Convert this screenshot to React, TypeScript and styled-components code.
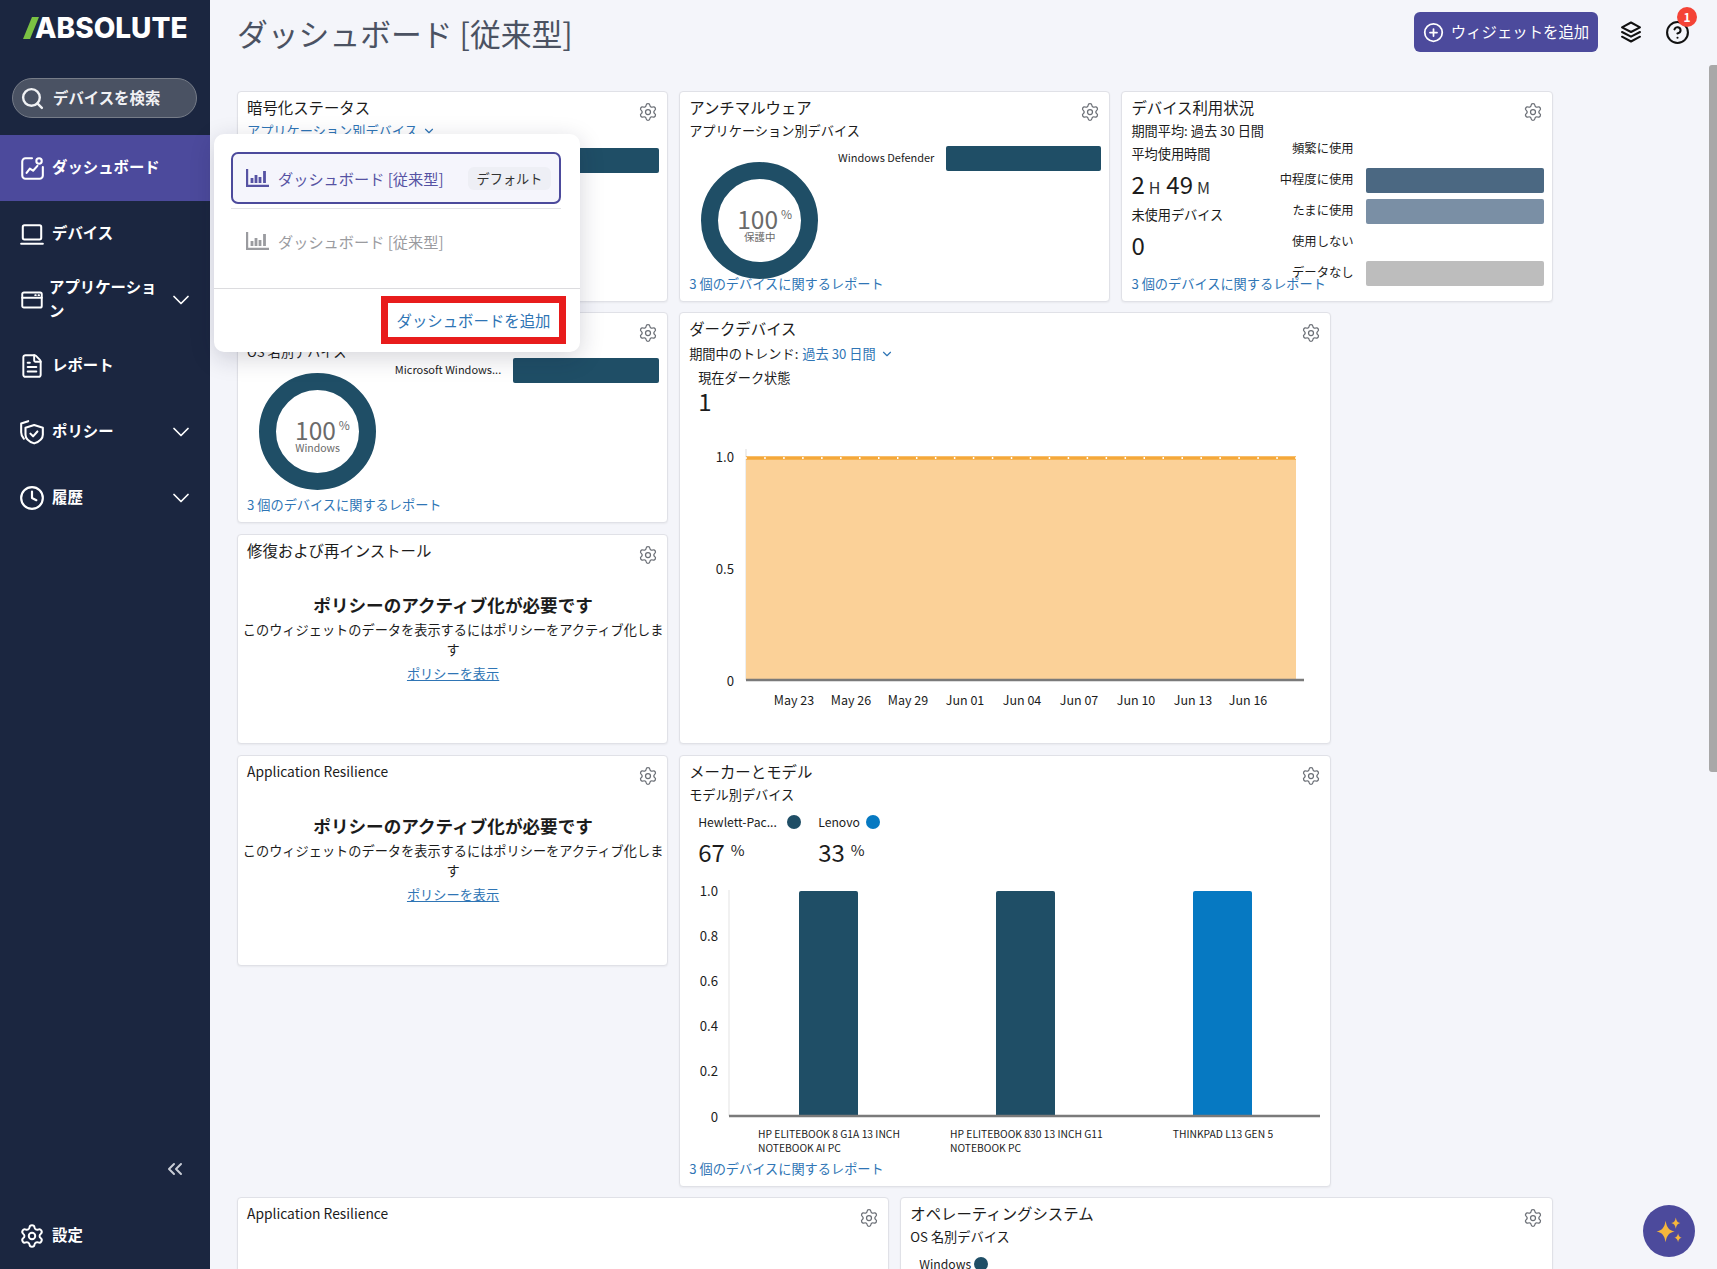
import React from "react";
import styled, { createGlobalStyle } from "styled-components";
import {
  ChevronDown,
  ChevronsLeft,
  CircleHelp,
  CirclePlus,
  Clock,
  FileText,
  Search,
  Settings,
} from "lucide-react";

const NAVY = "#1b2640";
const PURPLE = "#4c4a9c";
const TEAL = "#1f4e66";
const LINK = "#2f75b5";

const GlobalStyle = createGlobalStyle`
  html, body {
    margin: 0;
    height: 100%;
    overflow: hidden;
    background: #f4f5fa;
    font-family: "Noto Sans CJK JP", "Noto Sans", sans-serif;
    color: #1c1c1c;
  }
  * { box-sizing: border-box; }
`;

//@ icons ////////////////////////////////////////
const DashIcon = () => (
  <svg width="26" height="26" viewBox="0 0 24 24" fill="none" stroke="currentColor" strokeWidth="1.9" strokeLinecap="round" strokeLinejoin="round">
    <path d="M12 3H6a3 3 0 0 0-3 3v13a3 3 0 0 0 3 3h13a3 3 0 0 0 3-3v-8" />
    <circle cx="18.500" cy="5.500" r="2.500" />
    <path d="M7 16.500l3-4 3 2 4-4.500" />
  </svg>
);

const LaptopIcon = () => (
  <svg width="26" height="26" viewBox="0 0 24 24" fill="none" stroke="currentColor" strokeWidth="1.9" strokeLinecap="round" strokeLinejoin="round">
    <rect x="3.500" y="4" width="17" height="13" rx="1.500" />
    <path d="M2 21h20" />
  </svg>
);

const AppIcon = () => (
  <svg width="26" height="26" viewBox="0 0 24 24" fill="none" stroke="currentColor" strokeWidth="1.8" strokeLinecap="round" strokeLinejoin="round">
    <rect x="3" y="5" width="18" height="14" rx="1.500" />
    <path d="M3 10h18M15 7.500h.5M18 7.500h.5" />
  </svg>
);

const ShieldIcon = () => (
  <svg width="26" height="26" viewBox="0 0 24 24" fill="none" stroke="currentColor" strokeWidth="1.9" strokeLinecap="round" strokeLinejoin="round">
    <path d="M14 5.500l8 2.500v6.500c0 4-3.500 6.500-8 8-4.500-1.500-8-4-8-8V8z" />
    <path d="M10.500 13.500l2.500 2.500 4-4.500" />
    <path d="M8.500 2L2 4.200v8c0 2.500 1 4.500 2.500 6" />
  </svg>
);

const LayersIcon = () => (
  <svg width="24" height="24" viewBox="0 0 24 24" fill="none" stroke="currentColor" strokeWidth="2" strokeLinecap="round" strokeLinejoin="round">
    <path d="M12 2.500l9 4.800-9 4.700-9-4.700z" />
    <path d="M3 12l9 4.700 9-4.700" />
    <path d="M3 16.700l9 4.800 9-4.800" />
  </svg>
);

const BarsIcon = () => (
  <svg width="23" height="18" viewBox="0 0 23 18" fill="none" stroke="currentColor">
    <path d="M1 0v17h22" strokeWidth="2.400" />
    <path d="M6 14v-5M10 14V6M14 14V8M18.500 14V2" strokeWidth="2.800" />
  </svg>
);

const SparkIcon = () => (
  <svg width="34" height="34" viewBox="0 0 30 30" fill="#f6b73c">
    <path d="M12 6c1 6 3 8.500 8 9.500-5 1-7 3.500-8 9.500-1-6-3-8.500-8-9.500 5-1 7-3.500 8-9.500z" />
    <path d="M21 3c.5 3 1.500 4.500 4 5-2.500.5-3.500 2-4 5-.5-3-1.500-4.500-4-5 2.500-.5 3.500-2 4-5z" />
    <path d="M23 17c.4 2.400 1.200 3.500 3.200 4-2 .5-2.800 1.600-3.200 4-.4-2.400-1.200-3.500-3.200-4 2-.5 2.800-1.600 3.200-4z" />
  </svg>
);

//@ chart data ////////////////////////////////////
const darkTicks = Array.from({ length: 30 }, (_, i) => 66 + (i * 550) / 29);
const darkDates = [
  ["May 23", 114],
  ["May 26", 171],
  ["May 29", 228],
  ["Jun 01", 285],
  ["Jun 04", 342],
  ["Jun 07", 399],
  ["Jun 10", 456],
  ["Jun 13", 513],
  ["Jun 16", 568],
] as const;

const modelBars = [
  { x: 119, color: TEAL },
  { x: 316, color: TEAL },
  { x: 513, color: "#0679c2" },
];

const usageRows = [
  { label: "頻繁に使用" },
  { label: "中程度に使用", color: "#4b6882" },
  { label: "たまに使用", color: "#7a8fa5" },
  { label: "使用しない" },
  { label: "データなし", color: "#bdbdbd" },
];

function CardHead({ children, latin }: { children: React.ReactNode; latin?: boolean }) {
  return (
    <Head>
      <CardTitle $latin={latin}>{children}</CardTitle>
      <Gear>
        <Settings size={20} strokeWidth={1.5} />
      </Gear>
    </Head>
  );
}

function DonutBlock(props: {
  caption: string;
  label: string;
  barW: number;
  barTop: number;
  donutTop: number;
}) {
  return (
    <DonutBody>
      <Donut $top={props.donutTop}>
        <svg width="117" height="117" viewBox="0 0 117 117">
          <circle cx="58.500" cy="58.500" r="50" fill="none" stroke={TEAL} strokeWidth="17" />
        </svg>
        <DonutCenter>
          <DonutValue>
            100<small>%</small>
          </DonutValue>
          <DonutCaption>{props.caption}</DonutCaption>
        </DonutCenter>
      </Donut>
      <BarRow $top={props.barTop}>
        <BarLabel>{props.label}</BarLabel>
        <Bar $w={props.barW} $color={TEAL} />
      </BarRow>
    </DonutBody>
  );
}

function PolicyNotice() {
  return (
    <Notice>
      <NoticeTitle>ポリシーのアクティブ化が必要です</NoticeTitle>
      <NoticeText>このウィジェットのデータを表示するにはポリシーをアクティブ化します</NoticeText>
      <NoticeLink>ポリシーを表示</NoticeLink>
    </Notice>
  );
}

function App() {
  return (
    <Shell>
      <GlobalStyle />
      <Sidebar>
        <Logo>
          <svg width="16" height="22" viewBox="0 0 16 22">
            <path d="M9 0h7L7 22H0z" fill="#7ac143" />
          </svg>
          <LogoText>ABSOLUTE</LogoText>
        </Logo>
        <SearchBox>
          <Search size={25} strokeWidth={2.3} />
          <span>デバイスを検索</span>
        </SearchBox>
        <Nav>
          <NavItem $active>
            <DashIcon />
            <NavLabel>ダッシュボード</NavLabel>
          </NavItem>
          <NavItem>
            <LaptopIcon />
            <NavLabel>デバイス</NavLabel>
          </NavItem>
          <NavItem>
            <AppIcon />
            <NavLabel $tight>アプリケーション</NavLabel>
            <ChevronDown size={28} strokeWidth={1.5} />
          </NavItem>
          <NavItem>
            <FileText size={26} strokeWidth={1.8} />
            <NavLabel>レポート</NavLabel>
          </NavItem>
          <NavItem>
            <ShieldIcon />
            <NavLabel>ポリシー</NavLabel>
            <ChevronDown size={28} strokeWidth={1.5} />
          </NavItem>
          <NavItem>
            <Clock size={26} strokeWidth={2} />
            <NavLabel>履歴</NavLabel>
            <ChevronDown size={28} strokeWidth={1.5} />
          </NavItem>
        </Nav>
        <Collapse>
          <ChevronsLeft size={24} strokeWidth={2} />
        </Collapse>
        <NavItem>
          <Settings size={26} strokeWidth={1.8} />
          <NavLabel>設定</NavLabel>
        </NavItem>
      </Sidebar>

      <Main>
        <TopBar>
          <PageTitle>ダッシュボード [従来型]</PageTitle>
          <AddWidget>
            <CirclePlus size={21} strokeWidth={2} />
            <span>ウィジェットを追加</span>
          </AddWidget>
          <IconSlot>
            <LayersIcon />
          </IconSlot>
          <IconSlot>
            <CircleHelp size={25} strokeWidth={2} />
            <Badge>1</Badge>
          </IconSlot>
        </TopBar>

        <Scroller>
          <Board>
            <Card $col={1} $span={2} $row={1}>
              <CardHead>暗号化ステータス</CardHead>
              <SubLink>
                アプリケーション別デバイス <ChevronDown size={14} />
              </SubLink>
              <DonutBlock caption="保護中" label="Windows Defender" barW={146} barTop={7} donutTop={21} />
              <ReportLink>3 個のデバイスに関するレポート</ReportLink>
            </Card>

            <Card $col={3} $span={2} $row={1}>
              <CardHead>アンチマルウェア</CardHead>
              <SubText>アプリケーション別デバイス</SubText>
              <DonutBlock caption="保護中" label="Windows Defender" barW={155} barTop={5} donutTop={21} />
              <ReportLink>3 個のデバイスに関するレポート</ReportLink>
            </Card>

            <Card $col={5} $span={2} $row={1}>
              <CardHead>デバイス利用状況</CardHead>
              <UsageBody>
                <UsageLeft>
                  <UsageSub>期間平均: 過去 30 日間</UsageSub>
                  <UsageCaption>平均使用時間</UsageCaption>
                  <BigValue>
                    2<small>H</small>49<small>M</small>
                  </BigValue>
                  <UsageCaption>未使用デバイス</UsageCaption>
                  <BigValue>0</BigValue>
                </UsageLeft>
                <UsageRight>
                  {usageRows.map((row) => (
                    <UsageRow key={row.label}>
                      <UsageLabel>{row.label}</UsageLabel>
                      {row.color && <Bar $w={178} $color={row.color} />}
                    </UsageRow>
                  ))}
                </UsageRight>
              </UsageBody>
              <ReportLink>3 個のデバイスに関するレポート</ReportLink>
            </Card>

            <Card $col={1} $span={2} $row={2}>
              <CardHead>オペレーティングシステム</CardHead>
              <SubText>OS 名別デバイス</SubText>
              <DonutBlock caption="Windows" label="Microsoft Windows..." barW={146} barTop={-4} donutTop={11} />
              <ReportLink>3 個のデバイスに関するレポート</ReportLink>
            </Card>

            <Card $col={3} $span={3} $row={2} $rows={2}>
              <CardHead>ダークデバイス</CardHead>
              <TrendLine>
                期間中のトレンド: <em>過去 30 日間</em> <ChevronDown size={14} color={LINK} />
              </TrendLine>
              <DarkStat>
                <span>現在ダーク状態</span>
                <strong>1</strong>
              </DarkStat>
              <ChartSvg $top={3} width="652" height="300" viewBox="0 0 652 300">
                <line x1="66" y1="30" x2="66" y2="261" stroke="#dddddd" />
                <rect x="66" y="39" width="550" height="222" fill="#fbd198" />
                <line x1="66" y1="39" x2="616" y2="39" stroke="#f5a83a" strokeWidth="3.500" />
                {darkTicks.map((x) => (
                  <line key={x} x1={x} y1="38" x2={x} y2="40" stroke="#ffffff" strokeWidth="1.500" />
                ))}
                <line x1="66" y1="261" x2="624" y2="261" stroke="#7a7a7a" strokeWidth="2.500" />
                <text x="54" y="37" textAnchor="end" dominantBaseline="central">1.0</text>
                <text x="54" y="149" textAnchor="end" dominantBaseline="central">0.5</text>
                <text x="54" y="261" textAnchor="end" dominantBaseline="central">0</text>
                {darkDates.map(([label, x]) => (
                  <DateLabel key={label} x={x} y="280" textAnchor="middle" dominantBaseline="central">{label}</DateLabel>
                ))}
              </ChartSvg>
            </Card>

            <Card $col={1} $span={2} $row={3}>
              <CardHead>修復および再インストール</CardHead>
              <PolicyNotice />
            </Card>

            <Card $col={1} $span={2} $row={4}>
              <CardHead latin>Application Resilience</CardHead>
              <PolicyNotice />
            </Card>

            <Card $col={3} $span={3} $row={4} $rows={2}>
              <CardHead>メーカーとモデル</CardHead>
              <SubText>モデル別デバイス</SubText>
              <Legend>
                <LegendItem>
                  <LegendName $gap={10}>
                    Hewlett-Pac...
                    <Dot $color={TEAL} />
                  </LegendName>
                  <Percent>
                    67<small>%</small>
                  </Percent>
                </LegendItem>
                <LegendItem>
                  <LegendName $gap={6}>
                    Lenovo
                    <Dot $color="#0679c2" />
                  </LegendName>
                  <Percent>
                    33<small>%</small>
                  </Percent>
                </LegendItem>
              </Legend>
              <ChartSvg $top={11} width="652" height="280" viewBox="0 0 652 280">
                <line x1="49" y1="11" x2="49" y2="237" stroke="#e3e3e3" />
                {["1.0", "0.8", "0.6", "0.4", "0.2", "0"].map((tick, i) => (
                  <text key={tick} x="38" y={11 + i * 45.2} textAnchor="end" dominantBaseline="central">{tick}</text>
                ))}
                {modelBars.map((bar) => (
                  <path key={bar.x} d={`M${bar.x} 237V14a2 2 0 0 1 2-2h55a2 2 0 0 1 2 2v223z`} fill={bar.color} />
                ))}
                <line x1="49" y1="237" x2="640" y2="237" stroke="#7a7a7a" strokeWidth="2.500" />
                <XLabel x="78" y="254" dominantBaseline="central">HP ELITEBOOK 8 G1A 13 INCH</XLabel>
                <XLabel x="78" y="268" dominantBaseline="central">NOTEBOOK AI PC</XLabel>
                <XLabel x="270" y="254" dominantBaseline="central">HP ELITEBOOK 830 13 INCH G11</XLabel>
                <XLabel x="270" y="268" dominantBaseline="central">NOTEBOOK PC</XLabel>
                <XLabel x="543" y="254" textAnchor="middle" dominantBaseline="central">THINKPAD L13 GEN 5</XLabel>
              </ChartSvg>
              <ReportLink>3 個のデバイスに関するレポート</ReportLink>
            </Card>

            <Card $col={1} $span={3} $row={6} $rows={2}>
              <CardHead latin>Application Resilience</CardHead>
            </Card>

            <Card $col={4} $span={3} $row={6} $rows={2}>
              <CardHead>オペレーティングシステム</CardHead>
              <SubText>OS 名別デバイス</SubText>
              <Legend>
                <LegendItem>
                  <LegendName $gap={3}>
                    Windows
                    <Dot $color={TEAL} />
                  </LegendName>
                  <Percent>
                    100<small>%</small>
                  </Percent>
                </LegendItem>
              </Legend>
            </Card>
          </Board>
        </Scroller>
      </Main>

      <Popup>
        <PopupItem $active>
          <BarsIcon />
          <PopupName>ダッシュボード [従来型]</PopupName>
          <DefaultTag>デフォルト</DefaultTag>
        </PopupItem>
        <PopupRule />
        <PopupItem>
          <BarsIcon />
          <PopupName>ダッシュボード [従来型]</PopupName>
        </PopupItem>
        <PopupFooter>
          <AddDashboard>ダッシュボードを追加</AddDashboard>
        </PopupFooter>
      </Popup>

      <ScrollThumb />
      <Fab>
        <SparkIcon />
      </Fab>
    </Shell>
  );
}

//@ styled ////////////////////////////////////////
const Shell = styled.div`
  position: relative;
  display: flex;
  width: 100%;
  height: 100vh;
  overflow: hidden;
`;

const Sidebar = styled.aside`
  width: 210px;
  flex: none;
  display: flex;
  flex-direction: column;
  background: ${NAVY};
  color: #ffffff;
`;

const Logo = styled.div`
  height: 78px;
  flex: none;
  display: flex;
  align-items: flex-start;
  padding: 17px 0 0 23px;
`;

const LogoText = styled.span`
  font-family: Inter, "Liberation Sans", sans-serif;
  font-size: 28px;
  font-weight: 800;
  line-height: 22px;
  margin-left: -4px;
`;

const SearchBox = styled.div`
  height: 40px;
  margin: 0 13px 0 12px;
  padding: 0 8px 0 7px;
  display: flex;
  align-items: center;
  gap: 8px;
  border: 1px solid #767c88;
  border-radius: 20px;
  background: #4a5263;
  color: #f0f1f4;
  font-size: 15.400px;
  font-weight: 700;

  & > span {
    padding-bottom: 3px;
  }
`;

const Nav = styled.nav`
  margin-top: 17px;
  flex: 1;
`;

const NavItem = styled.div<{ $active?: boolean }>`
  height: 66px;
  padding: 0 15px 0 19px;
  display: flex;
  align-items: center;
  gap: 7px;
  background: ${({ $active }) => ($active ? PURPLE : "transparent")};
  color: #ffffff;
  font-size: 15.400px;
  font-weight: 700;

  & > svg {
    flex: none;
  }
`;

const NavLabel = styled.span<{ $tight?: boolean }>`
  flex: 1;
  margin-left: ${({ $tight }) => ($tight ? "-3px" : "0")};
  padding-bottom: 4px;
  line-height: 24px;
`;

const Collapse = styled.div`
  height: 66px;
  padding: 0 23px 2px 0;
  display: flex;
  align-items: center;
  justify-content: flex-end;
  color: #c9cdd6;
`;

const Main = styled.main`
  flex: 1;
  min-width: 0;
  display: flex;
  flex-direction: column;
`;

const TopBar = styled.header`
  height: 64px;
  flex: none;
  padding: 0 27px;
  display: flex;
  align-items: center;
  gap: 21px;
`;

const PageTitle = styled.h1`
  flex: 1;
  margin: 0;
  font-size: 30.800px;
  font-weight: 400;
  color: #4b5262;
`;

const AddWidget = styled.button`
  width: 184px;
  height: 40px;
  border: 0;
  border-radius: 6px;
  display: flex;
  align-items: center;
  justify-content: center;
  gap: 7px;
  background: ${PURPLE};
  color: #ffffff;
  font: inherit;
  font-size: 15.400px;

  & > span {
    padding-bottom: 3px;
  }
`;

const IconSlot = styled.div`
  position: relative;
  width: 25px;
  height: 25px;
  color: #111111;
`;

const Badge = styled.span`
  position: absolute;
  top: -13px;
  right: -7px;
  width: 20px;
  height: 20px;
  border-radius: 50%;
  background: #f44336;
  color: #ffffff;
  font-size: 12px;
  font-weight: 700;
  line-height: 20px;
  text-align: center;
`;

const Scroller = styled.div`
  flex: 1;
  min-height: 0;
  overflow: hidden;
  padding: 27px 0 0 27px;
`;

const Board = styled.div`
  display: grid;
  grid-template-columns: repeat(6, 210.100px);
  grid-auto-rows: 210.800px;
  gap: 10.500px 11px;
`;

const Card = styled.section<{ $col: number; $span: number; $row: number; $rows?: number }>`
  grid-column: ${({ $col, $span }) => `${$col} / span ${$span}`};
  grid-row: ${({ $row, $rows = 1 }) => `${$row} / span ${$rows}`};
  min-height: 0;
  padding: 5px 8px 7px 9px;
  display: flex;
  flex-direction: column;
  background: #ffffff;
  border: 1px solid #e0e1e7;
  border-radius: 4px;
  box-shadow: 0 1px 2px rgba(0, 0, 0, 0.05);
`;

const Head = styled.div`
  height: 24px;
  flex: none;
  display: flex;
  justify-content: space-between;
  align-items: flex-start;
`;

const CardTitle = styled.h2<{ $latin?: boolean }>`
  margin: 0;
  font-size: ${({ $latin }) => ($latin ? "13.800px" : "15.400px")};
  font-weight: 400;
  line-height: 20px;
`;

const Gear = styled.span`
  width: 22px;
  height: 22px;
  margin-top: 4px;
  display: flex;
  align-items: center;
  justify-content: center;
  color: #6b6f76;
`;

const SubText = styled.div`
  font-size: 13.200px;
  line-height: 20px;
`;

const SubLink = styled(SubText)`
  color: ${LINK};
  display: flex;
  align-items: center;
  gap: 4px;
`;

const TrendLine = styled(SubText)`
  margin-top: 2px;
  display: flex;
  align-items: center;
  gap: 4px;

  & em {
    font-style: normal;
    color: ${LINK};
  }
`;

const DonutBody = styled.div`
  flex: 1;
  min-height: 0;
  display: flex;
  justify-content: space-between;
  align-items: flex-start;
`;

const Donut = styled.div<{ $top: number }>`
  position: relative;
  width: 117px;
  height: 117px;
  margin: ${({ $top }) => $top}px 0 0 12px;
  flex: none;

  & > svg {
    display: block;
  }
`;

const DonutCenter = styled.div`
  position: absolute;
  inset: 0;
  display: flex;
  flex-direction: column;
  align-items: center;
  justify-content: center;
  color: #6a6a6a;
`;

const DonutValue = styled.div`
  margin-top: 3px;
  padding-left: 10px;
  font-size: 24.500px;
  line-height: 26px;

  & small {
    font-size: 12px;
    margin-left: 3px;
    vertical-align: 10px;
  }
`;

const DonutCaption = styled.div`
  margin-top: -2px;
  font-size: 10.500px;
  line-height: 13px;
`;

const BarRow = styled.div<{ $top: number }>`
  margin-top: ${({ $top }) => $top}px;
  display: flex;
  align-items: center;
  gap: 12px;
`;

const BarLabel = styled.span`
  padding-bottom: 4px;
  font-size: 11px;
  white-space: nowrap;
`;

const UsageLabel = styled(BarLabel)`
  font-size: 12.300px;
`;

const Bar = styled.div<{ $w: number; $color: string }>`
  width: ${({ $w }) => $w}px;
  height: 25px;
  flex: none;
  border-radius: 2px;
  background: ${({ $color }) => $color};
`;

const ReportLink = styled.a`
  height: 20px;
  flex: none;
  font-size: 13.200px;
  line-height: 20px;
  color: ${LINK};
`;

const UsageBody = styled.div`
  flex: 1;
  min-height: 0;
  display: flex;
  justify-content: space-between;
`;

const UsageLeft = styled.div`
  display: flex;
  flex-direction: column;
`;

const UsageSub = styled(SubText)`
  margin-bottom: 2px;
`;

const UsageCaption = styled.div`
  margin-top: 1px;
  font-size: 13.200px;
  line-height: 20px;
`;

const BigValue = styled.div`
  height: 40px;
  font-size: 24px;
  line-height: 40px;

  & small {
    font-size: 16px;
    margin: 0 6px 0 4px;
    color: #333333;
  }
`;

const UsageRight = styled.div`
  padding-top: 16px;
  display: flex;
  flex-direction: column;
  gap: 6px;
`;

const UsageRow = styled.div`
  width: 273px;
  height: 25px;
  flex: none;
  display: grid;
  grid-template-columns: 1fr 178px;
  column-gap: 12px;
  align-items: center;
  text-align: right;
`;

const DarkStat = styled.div`
  margin: 4px 0 0 9px;
  display: flex;
  flex-direction: column;
  font-size: 13.200px;
  line-height: 20px;

  & strong {
    margin-top: -2px;
    font-size: 24px;
    font-weight: 400;
    line-height: 30px;
  }
`;

const ChartSvg = styled.svg<{ $top: number }>`
  display: block;
  flex: none;
  margin: ${({ $top }) => $top}px -9px 0 -9px;

  & text {
    font-family: "Noto Sans CJK JP", sans-serif;
    font-size: 13.200px;
    fill: #1c1c1c;
  }
`;

const DateLabel = styled.text`
  && {
    font-size: 12.500px;
  }
`;

const XLabel = styled.text`
  && {
    font-size: 10.300px;
  }
`;

const Legend = styled.div`
  margin-top: 7px;
  padding-left: 9px;
  display: flex;
`;

const LegendItem = styled.div`
  width: 120px;
`;

const LegendName = styled.div<{ $gap: number }>`
  height: 20px;
  display: flex;
  align-items: center;
  gap: ${({ $gap }) => $gap}px;
  font-size: 12.200px;
`;

const Dot = styled.i<{ $color: string }>`
  width: 14px;
  height: 14px;
  border-radius: 50%;
  background: ${({ $color }) => $color};
`;

const Percent = styled.div`
  margin-top: 2px;
  font-size: 24px;
  line-height: 32px;

  & small {
    margin-left: 6px;
    font-size: 15px;
    vertical-align: 6px;
  }
`;

const Notice = styled.div`
  margin: 28px -6px 0;
  text-align: center;
`;

const NoticeTitle = styled.div`
  font-size: 17.600px;
  font-weight: 700;
  line-height: 26px;
`;

const NoticeText = styled.div`
  margin-top: 2px;
  font-size: 13.200px;
  line-height: 20.500px;
`;

const NoticeLink = styled.a`
  display: block;
  margin-top: 3px;
  font-size: 13.200px;
  line-height: 20px;
  color: ${LINK};
  text-decoration: underline;
`;

const Popup = styled.div`
  position: absolute;
  left: 214px;
  top: 134px;
  width: 366px;
  height: 218px;
  padding-top: 18px;
  background: #ffffff;
  border-radius: 10px;
  box-shadow: 0 6px 24px rgba(20, 24, 50, 0.18);
`;

const PopupItem = styled.div<{ $active?: boolean }>`
  height: 52px;
  margin: 0 19px 0 17px;
  padding: 0 8px 0 13px;
  display: flex;
  align-items: center;
  gap: 9px;
  border: ${({ $active }) => ($active ? `2px solid ${PURPLE}` : "2px solid transparent")};
  border-radius: 7px;
  background: ${({ $active }) => ($active ? "#f5f5fc" : "transparent")};
  color: ${({ $active }) => ($active ? "#5652a3" : "#9a9b9f")};
`;

const PopupName = styled.span`
  flex: 1;
  font-size: 15.200px;
`;

const DefaultTag = styled.span`
  width: 83px;
  height: 23px;
  border-radius: 6px;
  background: #eeeff5;
  color: #333333;
  font-size: 13.200px;
  line-height: 23px;
  text-align: center;
`;

const PopupRule = styled.hr`
  margin: 4px 19px 6px 17px;
  border: 0;
  border-top: 1px solid #e3e3e6;
`;

const PopupFooter = styled.div`
  margin-top: 21px;
  padding: 7px 14px 0 0;
  display: flex;
  justify-content: flex-end;
  border-top: 1px solid #dcdcdf;
`;

const AddDashboard = styled.div`
  width: 185px;
  height: 48px;
  border: 7px solid #e81c1c;
  display: flex;
  align-items: center;
  justify-content: center;
  color: ${LINK};
  font-size: 15.400px;
`;

const ScrollThumb = styled.div`
  position: absolute;
  right: 0;
  top: 65px;
  width: 8px;
  height: 707px;
  background: #a8a8a8;
  border-radius: 3px 0 0 3px;
`;

const Fab = styled.div`
  position: absolute;
  left: 1643px;
  top: 1205px;
  width: 52px;
  height: 52px;
  display: flex;
  align-items: center;
  justify-content: center;
  border-radius: 50%;
  background: ${PURPLE};
`;

export default App;
